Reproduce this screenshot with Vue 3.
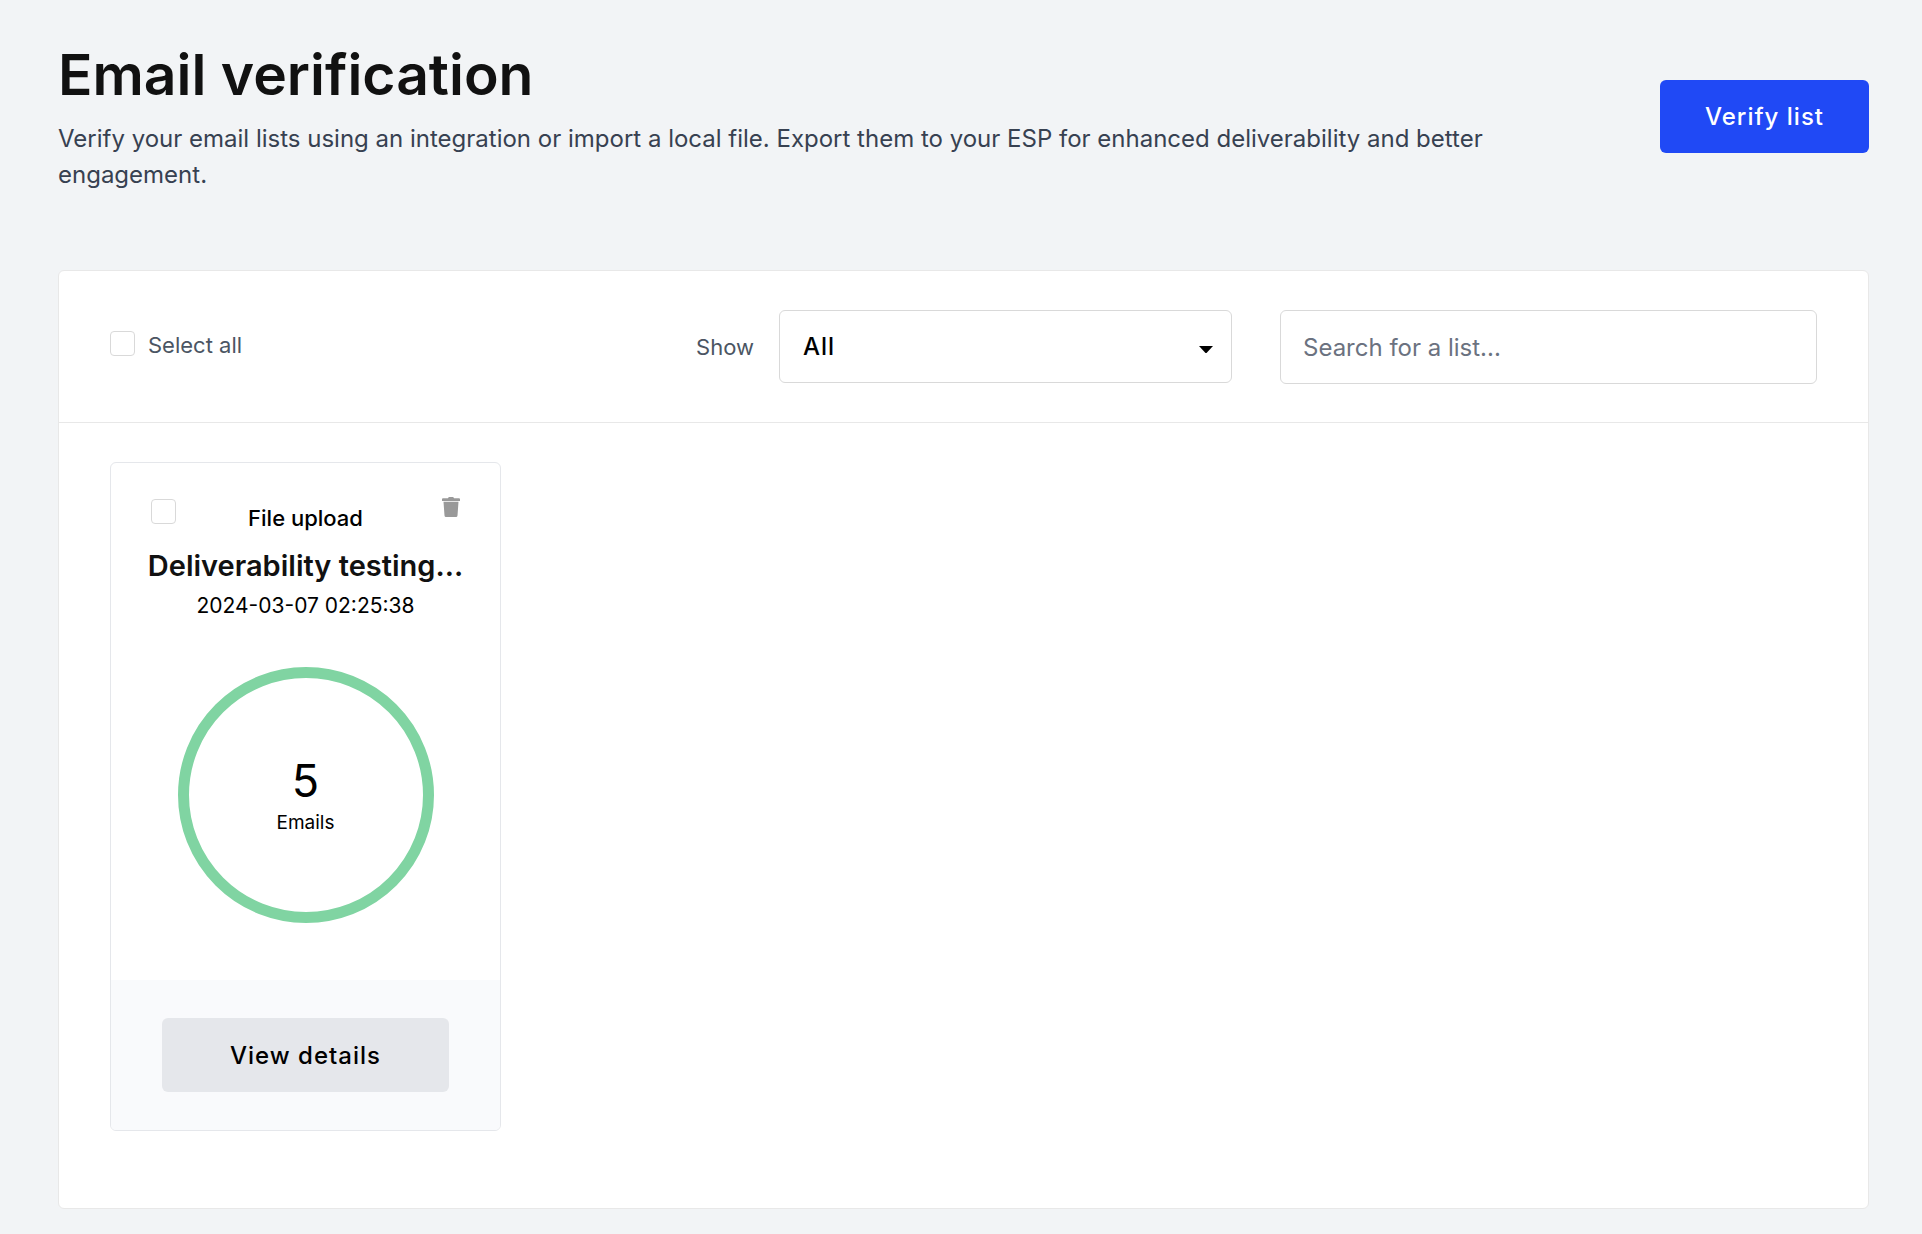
<script setup>
import { ref } from 'vue'

const filter = ref('all')
const search = ref('')
const selectAll = ref(false)

const lists = ref([
  {
    id: 1,
    source: 'File upload',
    name: 'Deliverability testing list',
    created: '2024-03-07 02:25:38',
    emails: 5,
    selected: false,
  },
])

const NAME_LIMIT = 22

function shorten(name) {
  return name.length > NAME_LIMIT ? name.slice(0, NAME_LIMIT) + '...' : name
}
</script>

<template>
  <main class="page">
    <header class="page-header">
      <div class="intro">
        <h1>Email verification</h1>
        <p>
          Verify your email lists using an integration or import a local file.
          Export them to your ESP for enhanced deliverability and better
          engagement.
        </p>
      </div>
      <button type="button" class="button primary">Verify list</button>
    </header>

    <section class="panel">
      <div class="toolbar">
        <label class="select-all">
          <input v-model="selectAll" type="checkbox" class="checkbox" />
          <span>Select all</span>
        </label>
        <div class="filter">
          <label for="show">Show</label>
          <div class="select-wrap">
            <select id="show" v-model="filter" class="field">
              <option value="all">All</option>
              <option value="verified">Verified</option>
              <option value="unverified">Unverified</option>
            </select>
            <svg class="caret" viewBox="0 0 14 8" aria-hidden="true">
              <path d="M0 0h14L8 6.500Q7 7.500 6 6.500Z" />
            </svg>
          </div>
        </div>
        <input
          v-model="search"
          type="search"
          class="field search"
          placeholder="Search for a list..."
          aria-label="Search for a list"
        />
      </div>

      <div class="lists">
        <article v-for="list in lists" :key="list.id" class="list-card">
          <div class="list-body">
            <div class="list-top">
              <input
                v-model="list.selected"
                type="checkbox"
                class="checkbox"
                :aria-label="'Select ' + list.name"
              />
              <span class="source">{{ list.source }}</span>
              <button type="button" class="trash" aria-label="Delete list">
                <svg viewBox="0 0 18 20" aria-hidden="true">
                  <path d="M6 1.300Q6.300 0 7.500 0h3Q11.700 0 12 1.300h5Q18 1.300 18 2.300V4H0V2.300Q0 1.300 1 1.300Z" />
                  <path d="M1.500 4.800h15L15.500 18.500Q15.400 20 14 20H4Q2.600 20 2.500 18.500Z" />
                </svg>
              </button>
            </div>
            <h2>{{ shorten(list.name) }}</h2>
            <time>{{ list.created }}</time>
            <div class="donut">
              <span class="count">{{ list.emails }}</span>
              <span class="unit">Emails</span>
            </div>
          </div>
          <footer>
            <button type="button" class="button secondary">View details</button>
          </footer>
        </article>
      </div>
    </section>
  </main>
</template>

<style>
body {
  background: #f2f4f6;
}
</style>

<style scoped>
* {
  box-sizing: border-box;
}

.page {
  padding: 39px 53px 25px 58px;
  font-family: Inter, 'Liberation Sans', sans-serif;
  color: #000;
}

button,
input,
select {
  font: inherit;
}

.page-header {
  display: flex;
  align-items: center;
  justify-content: space-between;
  gap: 160px;
  margin-bottom: 77px;
}

h1 {
  margin: 0;
  font-size: 57px;
  line-height: 72px;
  font-weight: 600;
  color: #111;
}

.intro p {
  margin: 10px 0 0;
  font-size: 24px;
  line-height: 36px;
  color: #374151;
}

.button {
  flex: none;
  border: 0;
  border-radius: 6px;
  font-size: 24px;
  font-weight: 500;
  letter-spacing: 1px;
  cursor: pointer;
}

.primary {
  height: 73px;
  padding: 0 45px;
  background: #2049f5;
  color: #fff;
}

.secondary {
  width: 100%;
  height: 74px;
  background: #e5e7eb;
  color: #000;
}

.panel {
  border: 1px solid #e8e8e8;
  border-radius: 6px;
  background: #fff;
}

.toolbar {
  display: flex;
  align-items: center;
  padding: 39px 51px 38px;
  border-bottom: 1px solid #e8e8e8;
  font-size: 22px;
  color: #4b5563;
}

.select-all {
  display: flex;
  align-items: flex-start;
  gap: 13px;
  margin-bottom: 4px;
  line-height: 28px;
}

.checkbox {
  flex: none;
  appearance: none;
  width: 25px;
  height: 25px;
  margin: 0;
  border: 1px solid #d9d9d9;
  border-radius: 4px;
  background: #fff;
}

.checkbox:checked {
  background: #2049f5;
}

.filter {
  display: flex;
  align-items: center;
  align-self: flex-start;
  gap: 25px;
  margin-left: auto;
  margin-right: 48px;
}

.select-wrap {
  position: relative;
  width: 453px;
}

.field {
  height: 74px;
  border: 1px solid #d9d9d9;
  border-radius: 6px;
  background: #fff;
  font-size: 24px;
  outline-color: #2049f5;
}

select.field {
  display: block;
  width: 100%;
  height: 73px;
  padding: 0 48px 0 23px;
  appearance: none;
  font-weight: 500;
  letter-spacing: 1px;
  color: #000;
}

.caret {
  position: absolute;
  top: 36px;
  right: 19px;
  width: 14px;
  height: 8px;
  pointer-events: none;
}

.search {
  width: 537px;
  padding: 0 22px;
  appearance: none;
}

.search::placeholder {
  color: #6b7280;
  opacity: 1;
}

.lists {
  display: flex;
  flex-wrap: wrap;
  gap: 40px;
  padding: 39px 51px 77px;
}

.list-card {
  width: 391px;
  border: 1px solid #e5e7eb;
  border-radius: 6px;
  overflow: hidden;
}

.list-body {
  display: flex;
  flex-direction: column;
  align-items: center;
  padding: 34px 38px 57px;
}

.list-top {
  display: grid;
  grid-template-columns: 26px 1fr 26px;
  width: 100%;
  padding: 0 2px;
}

.list-top .checkbox {
  margin-top: 2px;
}

.source {
  margin-top: 6px;
  font-size: 22px;
  line-height: 30px;
  font-weight: 500;
  text-align: center;
}

.trash {
  justify-self: end;
  width: 18px;
  height: 20px;
  padding: 0;
  border: 0;
  background: none;
  cursor: pointer;
}

.trash svg {
  display: block;
  width: 18px;
  height: 20px;
  fill: #999;
}

h2 {
  margin: 13px 0 0;
  font-size: 29px;
  line-height: 40px;
  font-weight: 600;
  color: #111;
  white-space: nowrap;
}

time {
  font-size: 21px;
  line-height: 40px;
}

.donut {
  display: flex;
  flex-direction: column;
  align-items: center;
  justify-content: center;
  width: 256px;
  height: 256px;
  margin-top: 41px;
  padding-top: 8px;
  border: 11px solid #80d4a2;
  border-radius: 50%;
}

.count {
  font-size: 45px;
  line-height: 48px;
}

.unit {
  font-size: 19px;
  line-height: 36px;
}

footer {
  padding: 38px 51px;
  background: #f9fafc;
}
</style>
